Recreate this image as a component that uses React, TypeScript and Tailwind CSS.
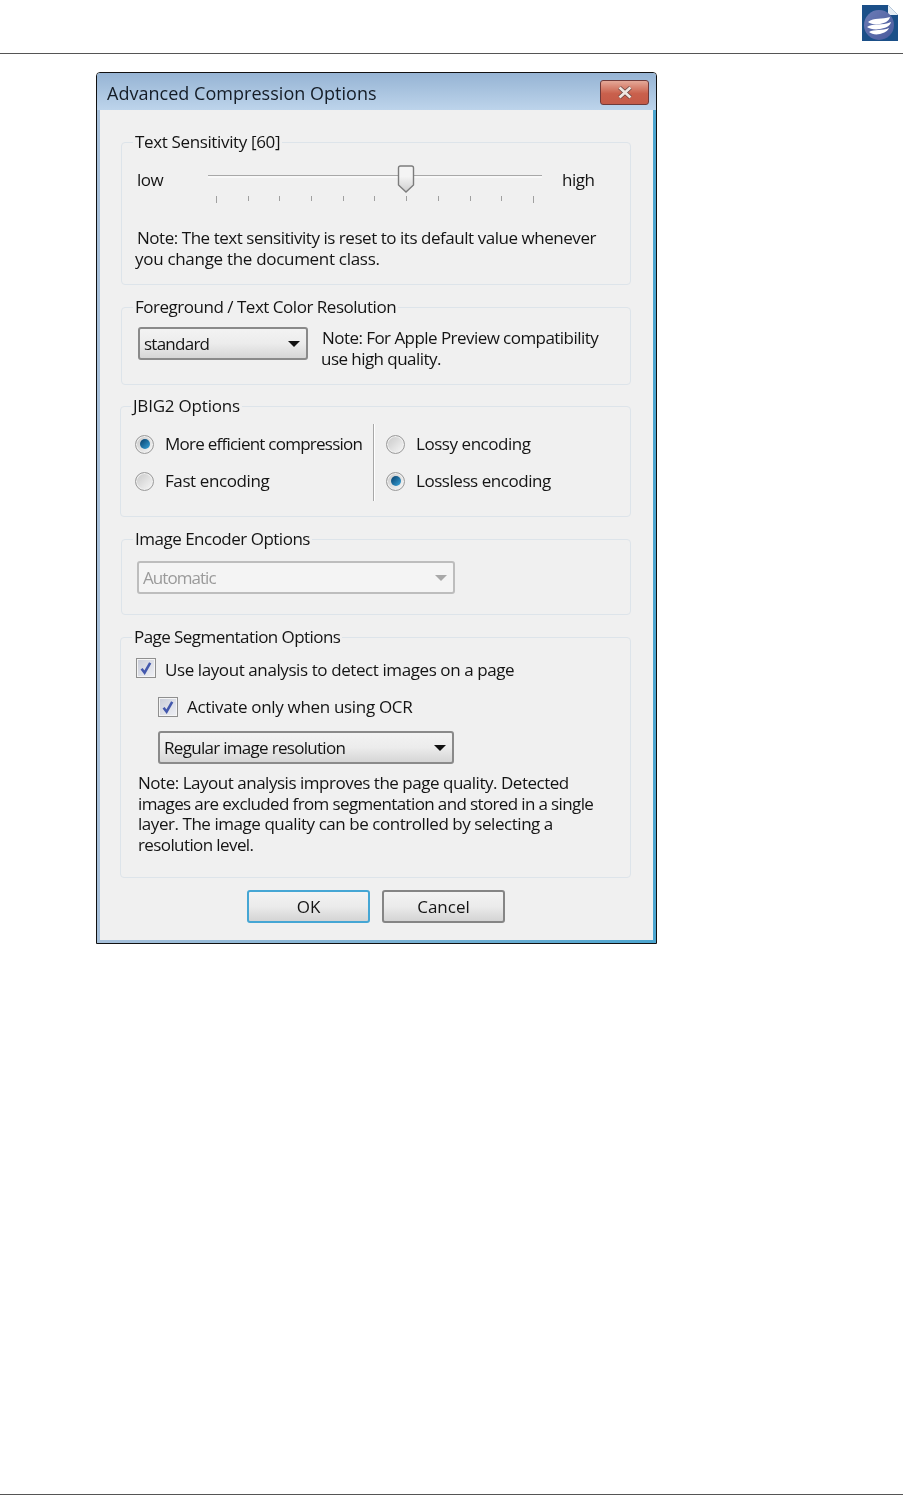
import type { ReactNode } from "react";

const FONT = "font-['Open_Sans','Noto_Sans',sans-serif]";
const TEXT = "text-[17px] text-[#141414]";

function GroupBox({ title, className, legendClass, children }: { title: string; className: string; legendClass: string; children: ReactNode }) {
  return (
    <fieldset className={`rounded-[4px] border border-[#dde4ea] ${className}`}>
      <legend className={`h-5 px-[2px] leading-5 ${TEXT} ${legendClass}`}>{title}</legend>
      {children}
    </fieldset>
  );
}

function Radio({ checked, label, tracking }: { checked?: boolean; label: string; tracking: string }) {
  return (
    <div className="flex h-[20px] items-center gap-[11px]">
      <span className="flex h-[19px] w-[19px] items-center justify-center rounded-full border border-[#9a9a9a] bg-gradient-to-br from-[#c8c8c8] to-[#f8f8f8] shadow-[inset_0_0_0_1px_#f0f0f0]">
        {checked && <span className="h-[10px] w-[10px] rounded-full bg-gradient-to-br from-[#083f6b] to-[#39a6dc]" />}
      </span>
      <span className={`${TEXT} ${tracking}`}>{label}</span>
    </div>
  );
}

function Check({ label, tracking, labelClass }: { label: string; tracking: string; labelClass?: string }) {
  return (
    <div className="flex h-[20px] items-center gap-[9px]">
      <span className="flex h-[20px] w-[20px] items-center justify-center border border-[#8f8f8f] bg-gradient-to-br from-[#c8ccd8] to-[#f0f1f6] shadow-[inset_0_0_0_1px_#f5f5f5]">
        <svg viewBox="0 0 12 12" className="h-[14px] w-[14px]">
          <path d="M2.2 6.6 L4.8 10 L9.6 1.6" fill="none" stroke="#4358ad" strokeWidth="2.2" />
        </svg>
      </span>
      <span className={`${TEXT} ${tracking} ${labelClass ?? ""}`}>{label}</span>
    </div>
  );
}

function Combo({ label, tracking, className }: { label: string; tracking: string; className: string }) {
  return (
    <div className={`flex h-[33px] items-center justify-between rounded-[3px] border-2 border-[#8a8a8a] bg-gradient-to-b from-[#f3f3f3] via-[#ececec] to-[#d6d6d6] pl-[4px] pr-[6px] ${className}`}>
      <span className={`${TEXT} ${tracking}`}>{label}</span>
      <span className="h-0 w-0 border-x-[6px] border-t-[6px] border-x-transparent border-t-[#111]" />
    </div>
  );
}

function Btn({ label, focused }: { label: string; focused?: boolean }) {
  return (
    <button className={`h-[33px] w-[123px] rounded-[3px] border-2 bg-gradient-to-b from-[#f3f3f3] via-[#ebebeb] to-[#d4d4d4] ${TEXT} ${focused ? "border-[#45a6d4]" : "border-[#858585]"}`}>
      {label}
    </button>
  );
}

function Logo() {
  return (
    <svg viewBox="0 0 36 36" className="h-[36px] w-[36px] blur-[0.3px]">
      <defs>
        <linearGradient id="disc" x1="0" y1="0" x2="1" y2="1">
          <stop offset="0" stopColor="#6c7cb6" />
          <stop offset="1" stopColor="#4a5a9c" />
        </linearGradient>
      </defs>
      <path d="M0 0 H26 L36 10 V36 H0 Z" fill="#1b4f88" />
      <path d="M26 0 L36 10 H28 Q26 10 26 8 Z" fill="#e6edf4" />
      <circle cx="17" cy="20" r="15" fill="url(#disc)" />
      <path d="M6 17 C12 12 20 15 28 12 C27 16 23 18 18 19 C13 20 9 19 6 17 Z" fill="#fff" />
      <path d="M5 22 C11 18 20 21 29 17 C28 21 24 23 18 24 C13 25 8 24 5 22 Z" fill="#fff" />
      <path d="M7 27 C12 24 20 26 27 23 C26 26 22 28 18 29 C13 30 10 29 7 27 Z" fill="#fff" />
    </svg>
  );
}

export default function App() {
  return (
    <div className={`flex h-[1495px] w-[903px] flex-col overflow-hidden bg-white ${FONT}`}>
      <header className="flex h-[54px] shrink-0 items-start justify-end border-b border-[#555] pr-[5px] pt-[5px]">
        <Logo />
      </header>
      <main className="flex-1 pl-[96px] pt-[18px]">
        <div className="flex h-[872px] w-[561px] flex-col rounded-t-[4px] border border-[#111] blur-[0.35px]">
          <div className="flex h-[37px] shrink-0 items-start justify-between rounded-t-[3px] bg-gradient-to-b from-[#96b4d4] to-[#bdd4eb] pr-[7px]">
            <span className="pl-[10px] pt-[8px] text-[18px] leading-6 tracking-[0.03px] text-[#141c26]">Advanced Compression Options</span>
            <span className="mt-[7px] flex h-[25px] w-[49px] items-center justify-center rounded-[3px] border border-[#6e3a3a] bg-gradient-to-b from-[#e4a898] via-[#c9604c] via-55% to-[#c45a48]">
              <svg viewBox="0 0 18 13" className="h-[13px] w-[18px]">
                <path d="M3.5 1.5 L14.5 11.5 M14.5 1.5 L3.5 11.5" stroke="#5a3a38" strokeWidth="4" fill="none" />
                <path d="M3.5 1.5 L14.5 11.5 M14.5 1.5 L3.5 11.5" stroke="#efe6e0" strokeWidth="2.8" fill="none" />
              </svg>
            </span>
          </div>
          <div className="flex-1 bg-gradient-to-r from-[#a7c0da] to-[#4ba5cf] px-[3px] pb-[3px]">
            <div className="h-full bg-[#f0f0f0] pl-[21px] pt-[22px]">
              <div className="flex w-[510px] flex-col">
                <GroupBox title="Text Sensitivity [60]" legendClass="-ml-[4px] tracking-[-0.36px]" className="h-[153px] pl-[15px]">
                  <div className="flex h-[67px] items-start pt-[16px]">
                    <span className={`w-[71px] leading-6 tracking-[-0.5px] ${TEXT}`}>low</span>
                    <div className="relative w-[334px]">
                      <div className="mt-[7px] h-[3px] border-t border-[#a8a8a8] bg-[#f8f8f8]" />
                      <div className="mt-[18px] flex justify-between px-[8px]">
                        {Array.from({ length: 11 }, (_, i) => (
                          <span key={i} className={`w-px bg-[#a0a0a0] ${i === 0 || i === 10 ? "h-[7px]" : "h-[5px]"}`} />
                        ))}
                      </div>
                      <svg viewBox="0 0 18 28" className="absolute left-[189px] top-[-3px] h-[28px] w-[18px]">
                        <defs>
                          <linearGradient id="thumb" x1="0" y1="0" x2="0" y2="1">
                            <stop offset="0.4" stopColor="#f4f4f4" />
                            <stop offset="1" stopColor="#cfcfcf" />
                          </linearGradient>
                        </defs>
                        <path d="M1.5 3 Q1.5 1 3.5 1 H14.5 Q16.5 1 16.5 3 V20 L9 27 L1.5 20 Z" fill="url(#thumb)" stroke="#7c7c7c" strokeWidth="1.4" />
                      </svg>
                    </div>
                    <span className={`ml-[20px] leading-6 tracking-[-0.5px] ${TEXT}`}>high</span>
                  </div>
                  <p className={`mt-[8px] leading-[21px] ${TEXT}`}>
                    <span className="tracking-[-0.46px]">Note: The text sensitivity is reset to its default value whenever</span>
                    <br />
                    <span className="-ml-[2px] tracking-[-0.3px]">you change the document class.</span>
                  </p>
                </GroupBox>

                <GroupBox title="Foreground / Text Color Resolution" legendClass="-ml-[5px] tracking-[-0.48px]" className="mt-[12px] h-[88px] pl-[16px]">
                  <div className="flex items-start gap-[14px] pt-[10px]">
                    <Combo label="standard" tracking="tracking-[-0.75px]" className="w-[170px]" />
                    <p className={`leading-[21px] ${TEXT}`}>
                      <span className="tracking-[-0.55px]">Note: For Apple Preview compatibility</span>
                      <br />
                      <span className="-ml-[1px] tracking-[-0.55px]">use high quality.</span>
                    </p>
                  </div>
                </GroupBox>

                <GroupBox title="JBIG2 Options" legendClass="-ml-[4px] tracking-[-0.2px]" className="-ml-[1px] mt-[11px] h-[121px] pl-[14px]">
                  <div className="flex pt-[8px]">
                    <div className="flex w-[238px] flex-col gap-[17px] pt-[10px]">
                      <Radio checked label="More efficient compression" tracking="tracking-[-0.75px]" />
                      <Radio label="Fast encoding" tracking="tracking-[-0.4px]" />
                    </div>
                    <div className="h-[77px] w-[2px] border-l border-[#a8a8a8] bg-white" />
                    <div className="flex flex-col gap-[17px] pl-[11px] pt-[10px]">
                      <Radio label="Lossy encoding" tracking="tracking-[-0.45px]" />
                      <Radio checked label="Lossless encoding" tracking="tracking-[-0.45px]" />
                    </div>
                  </div>
                </GroupBox>

                <GroupBox title="Image Encoder Options" legendClass="-ml-[4px] tracking-[-0.5px]" className="mt-[12px] h-[86px] pl-[15px]">
                  <div className="pt-[12px]">
                    <div className="flex h-[33px] w-[318px] items-center justify-between rounded-[3px] border-2 border-[#bdbdbd] bg-[#f4f4f4] pl-[4px] pr-[6px]">
                      <span className="text-[17px] tracking-[-0.95px] text-[#9a9a9a]">Automatic</span>
                      <span className="h-0 w-0 border-x-[6px] border-t-[6px] border-x-transparent border-t-[#a8a8a8]" />
                    </div>
                  </div>
                </GroupBox>

                <GroupBox title="Page Segmentation Options" legendClass="-ml-[4px] tracking-[-0.56px]" className="-ml-[1px] mt-[12px] h-[251px] pl-[15px]">
                  <div className="pt-[11px]">
                    <Check label="Use layout analysis to detect images on a page" tracking="tracking-[-0.41px]" labelClass="pt-[3px]" />
                    <div className="pl-[22px] pt-[19px]">
                      <Check label="Activate only when using OCR" tracking="tracking-[-0.32px]" />
                      <Combo label="Regular image resolution" tracking="tracking-[-0.7px]" className="mt-[14px] w-[296px]" />
                    </div>
                    <p className={`mt-[9px] pl-[2px] leading-[20.5px] ${TEXT}`}>
                      <span className="tracking-[-0.48px]">Note: Layout analysis improves the page quality. Detected</span>
                      <br />
                      <span className="tracking-[-0.63px]">images are excluded from segmentation and stored in a single</span>
                      <br />
                      <span className="tracking-[-0.45px]">layer. The image quality can be controlled by selecting a</span>
                      <br />
                      <span className="tracking-[-0.6px]">resolution level.</span>
                    </p>
                  </div>
                </GroupBox>
              </div>
              <div className="flex gap-[12px] pl-[126px] pt-[12px]">
                <Btn focused label="OK" />
                <Btn label="Cancel" />
              </div>
            </div>
          </div>
        </div>
      </main>
      <footer className="h-px shrink-0 bg-[#555]" />
    </div>
  );
}
